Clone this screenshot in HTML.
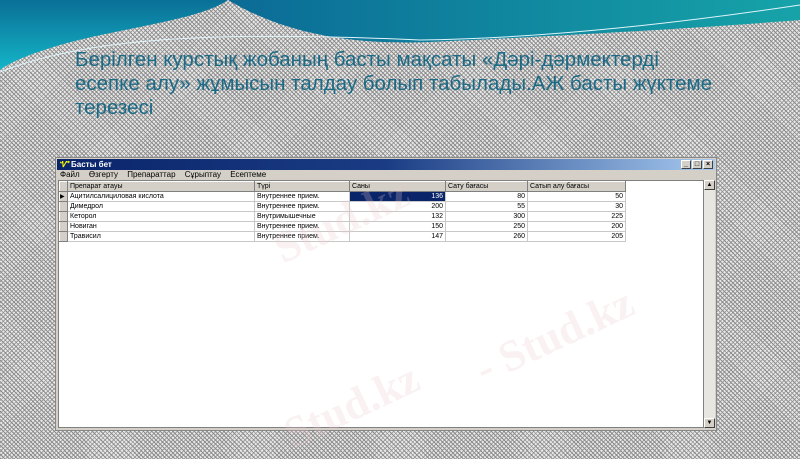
<!DOCTYPE html>
<html><head><meta charset="utf-8"><style>
*{margin:0;padding:0;box-sizing:border-box}
body{width:800px;height:450px;overflow:hidden;position:relative;font-family:"Liberation Sans",sans-serif;
background-color:#c8c8c8;
background-image:repeating-linear-gradient(45deg,#8c8c8c 0 1px,transparent 1px 3px),repeating-linear-gradient(-45deg,#a0a0a0 0 1px,#e8e8e8 1px 3px);}
.title{position:absolute;left:75px;top:48px;width:720px;font-size:20.5px;line-height:24px;color:#1b6a86;letter-spacing:0px;white-space:nowrap}
.win{position:absolute;left:55px;top:157px;width:662px;height:274px;background:#d4d0c8;border:1px solid #888}
.tb{position:absolute;left:1px;top:1px;right:1px;height:11px;background:linear-gradient(90deg,#0a246a 0%,#1a3c84 50%,#a6caf0 100%);color:#fff;font-size:8px;font-weight:bold;line-height:11px;padding-left:14px}
.ic{position:absolute;left:2px;top:1px;width:9px;height:9px;color:#ff0;font-size:8px;line-height:9px;font-style:italic}
.btns{position:absolute;right:2px;top:1px;display:flex;gap:1px}
.btns div{width:10px;height:9px;background:#d4d0c8;border:1px solid;border-color:#fff #404040 #404040 #fff;font-size:7px;line-height:7px;text-align:center;color:#000}
.menu{position:absolute;left:4px;top:12px;font-size:8px;color:#000;word-spacing:7px}
.client{position:absolute;left:2px;top:22px;width:646px;height:248px;background:#fff;border:1px solid #808080}
.sb{position:absolute;left:648px;top:22px;width:11px;height:248px;background:#e8e6e0}
.sb div{position:absolute;left:0;width:11px;height:10px;background:#d4d0c8;border:1px solid;border-color:#fff #404040 #404040 #fff;font-size:6px;text-align:center;line-height:8px}
table{position:absolute;left:0;top:0;border-collapse:collapse;font-size:7px;color:#000}
td{height:10px;border:1px solid #c8c8c8;padding:0 2px;white-space:nowrap;overflow:hidden}
tr.h td{background:#d4d0c8;border-color:#fff #808080 #808080 #fff}
td.i{background:#d4d0c8;width:8px;border-color:#fff #808080 #808080 #fff;font-size:6px;padding:0}
td.n{text-align:right}
.wm{position:absolute;font-family:"Liberation Serif",serif;font-weight:bold;color:rgba(230,200,205,.25);font-size:44px;transform:rotate(-25deg);white-space:nowrap}
</style></head><body>
<svg width="800" height="80" style="position:absolute;left:0;top:0">
<defs><linearGradient id="g" x1="0" y1="0" x2="0" y2="1"><stop offset="0" stop-color="#0a6f96"/><stop offset="1" stop-color="#14b5c8"/></linearGradient>
<linearGradient id="g2" x1="0" y1="0" x2="1" y2="0"><stop offset="0" stop-color="#0b6b96"/><stop offset="1" stop-color="#16a3a8"/></linearGradient></defs>
<path d="M0 0H228C200 20 120 28 60 45C30 54 10 62 0 70Z" fill="url(#g)"/>
<path d="M228 0H800V20C700 28 560 36 430 42C330 46 270 25 228 0Z" fill="url(#g2)"/>
<path d="M0 72C80 40 200 30 420 40C560 38 700 20 800 5" stroke="#e0f4fa" stroke-width="1" fill="none"/>
</svg>
<div class="title">Берілген курстық жобаның басты мақсаты «Дәрі-дәрмектерді<br>есепке алу» жұмысын талдау болып табылады.АЖ басты жүктеме<br>терезесі</div>
<div class="win">
<div class="tb"><span class="ic">Ꮙ</span>Басты бет<div class="btns"><div>_</div><div>□</div><div>×</div></div></div>
<div class="menu">Файл Өзгерту Препараттар Сұрыптау Есептеме</div>
<div class="client">
<table>
<tr class="h"><td class="i"></td><td style="width:187px">Препарат атауы</td><td style="width:95px">Түрі</td><td style="width:96px">Саны</td><td style="width:82px">Сату бағасы</td><td style="width:98px">Сатып алу бағасы</td></tr>
<tr><td class="i">▶</td><td>Ацитилсалициловая кислота</td><td>Внутреннее прием.</td><td class="n" style="background:#0a246a;color:#fff">136</td><td class="n">80</td><td class="n">50</td></tr>
<tr><td class="i"></td><td>Димедрол</td><td>Внутреннее прием.</td><td class="n">200</td><td class="n">55</td><td class="n">30</td></tr>
<tr><td class="i"></td><td>Кеторол</td><td>Внутримышечные</td><td class="n">132</td><td class="n">300</td><td class="n">225</td></tr>
<tr><td class="i"></td><td>Новиган</td><td>Внутреннее прием.</td><td class="n">150</td><td class="n">250</td><td class="n">200</td></tr>
<tr><td class="i"></td><td>Трависил</td><td>Внутреннее прием.</td><td class="n">147</td><td class="n">260</td><td class="n">205</td></tr>
</table>
</div>
<div class="sb"><div style="top:0">▲</div><div style="bottom:0">▼</div></div>
</div>
<div class="wm" style="left:270px;top:195px">Stud.kz</div>
<div class="wm" style="left:470px;top:310px">- Stud.kz</div>
<div class="wm" style="left:280px;top:380px">Stud.kz</div>
</body></html>
